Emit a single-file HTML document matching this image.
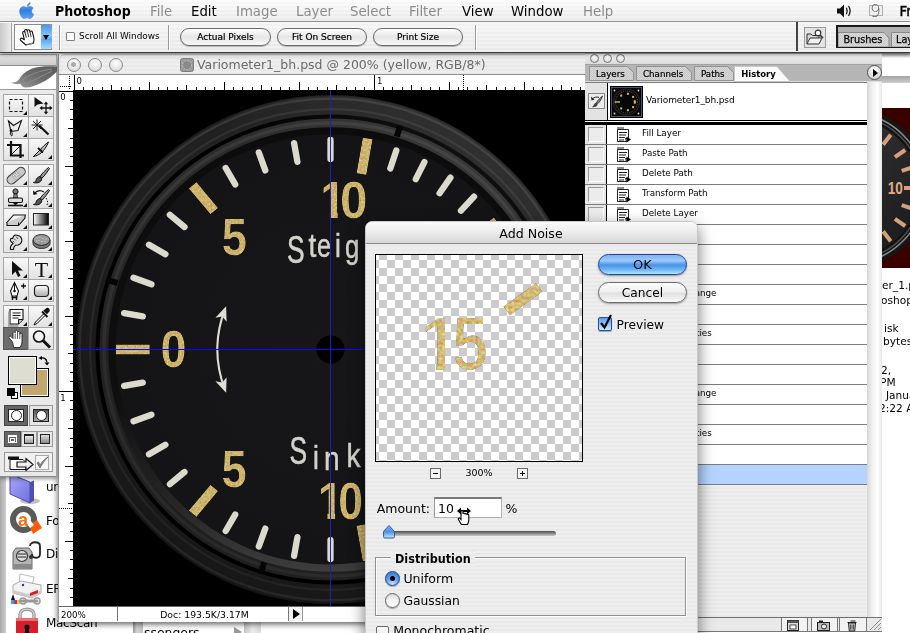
<!DOCTYPE html>
<html lang="en">
<head>
<meta charset="utf-8">
<title>Photoshop - Add Noise</title>
<style>
*{box-sizing:border-box;margin:0;padding:0}
html,body{width:910px;height:633px;overflow:hidden;background:#fff}
body{position:relative;font-family:"DejaVu Sans","Liberation Sans",sans-serif;font-size:9px;color:#000}
.abs{position:absolute}
body>div{will-change:transform}
.pin{background:repeating-linear-gradient(180deg,#eeeeee 0,#eeeeee 2px,#e9e9e9 2px,#e9e9e9 4px)}
#menubar.pin{background:linear-gradient(180deg,rgba(255,255,255,.75),rgba(255,255,255,0)),repeating-linear-gradient(180deg,#f1f1f1 0,#f1f1f1 2px,#e9e9e9 2px,#e9e9e9 4px)}
#optbar.pin{background:linear-gradient(180deg,rgba(255,255,255,.45),rgba(255,255,255,0)),repeating-linear-gradient(180deg,#f0f0f0 0,#f0f0f0 2px,#e9e9e9 2px,#e9e9e9 4px)}
/* ---------- menu bar ---------- */
#menubar{left:0;top:0;width:910px;height:22px;border-bottom:1px solid #8e8e8e;z-index:50}
#menubar span{position:absolute;top:2px;font-size:13.300px;line-height:19px;white-space:nowrap}
#menubar .dis{color:#8c8c8c}
/* ---------- options bar ---------- */
#optbar{left:0;top:22px;width:910px;height:31px;border-bottom:1px solid #3a3a3a;box-shadow:inset 0 1px 0 #fafafa,0 1px 4px rgba(0,0,0,.5);z-index:49}
.pill{position:absolute;top:6px;height:18px;border:1px solid #6a6a6a;border-radius:9px;background:linear-gradient(180deg,#fefefe 0,#e6e6e6 50%,#f8f8f8 100%);font-size:9px;line-height:16px;-webkit-text-stroke:.2px #000;text-align:center;box-shadow:0 1px 1px rgba(0,0,0,.25)}
.vsep{position:absolute;top:3px;width:2px;height:25px;border-left:1px solid #9a9a9a;border-right:1px solid #fff}
/* ---------- document window ---------- */
#doc{left:58px;top:54px;width:540px;height:568px;z-index:10;background:#fff;border-left:1px solid #9a9a9a;box-shadow:0 2px 6px rgba(0,0,0,.65)}
#doctitle{left:0;top:0;width:540px;height:21px;border-bottom:1px solid #8e8e8e;border-radius:6px 0 0 0;border-top:1px solid #c4c4c4}
#doctitle .t{position:absolute;left:138px;top:1px;font-size:12.5px;line-height:18px;color:#6b6b6b;white-space:nowrap}
.tl{position:absolute;top:3px;width:14px;height:14px;border-radius:50%;border:1px solid #8c8c8c;background:radial-gradient(circle at 50% 35%,#fff 0,#e4e4e4 60%,#cfcfcf 100%)}
#canvas{left:14px;top:36px;width:525px;height:516px;background:#000;overflow:hidden}
/* ---------- toolbox ---------- */
#toolbox{left:0;top:54px;width:57px;height:423px;z-index:20;background:#e9e9e9;border-right:1px solid #a4a4a4;border-bottom:1px solid #8a8a8a;box-shadow:0 2px 4px rgba(0,0,0,.4)}
.tc{position:absolute;width:25px;height:22px;border:1px solid #a6a6a6;background:linear-gradient(180deg,#f8f8f8,#e2e2e2)}
.tc.sel{background:#6d6d6d;border-color:#555}
.tc svg{position:absolute;left:0;top:0}
.tri{position:absolute;right:1px;bottom:1px;width:0;height:0;border-left:4px solid transparent;border-bottom:4px solid #111}
/* ---------- history palette ---------- */
#hist{left:585px;top:52px;width:298px;height:581px;z-index:30;background:#e4e4e4}
.hrow{position:absolute;left:0;width:283px;height:20px;background:#fff;border-bottom:1px solid #7c7c7c}
.hrow .lc{position:absolute;left:0;top:0;width:22px;height:19px;background:#e6e6e6;border-right:1px solid #000}
.hrow .lc i{position:absolute;left:3px;top:2px;width:16px;height:15px;border:1px solid #999;border-right-color:#fff;border-bottom-color:#fff;background:#ececec}
.hrow .tx{position:absolute;left:57px;top:2px;font-size:8.750px;line-height:12px;white-space:nowrap}
.hrow svg{position:absolute;left:31px;top:2px}
/* ---------- dialog ---------- */
#dlg{left:365px;top:222px;width:330px;height:420px;z-index:60;border:1px solid #c9c9c9;border-radius:7px 7px 0 0;box-shadow:0 6px 16px rgba(0,0,0,.55);overflow:hidden}
#dlg .lbl{position:absolute;font-size:12.5px;line-height:16px;white-space:nowrap}
.aqbtn{position:absolute;left:233px;width:88px;height:21px;border-radius:11px;font-size:13px;line-height:19px;text-align:center;border:1px solid #5a5a5a}
</style>
</head>
<body>
<!--BG--><div class="abs" style="left:0;top:53px;width:60px;height:580px;background:#fff"></div>
<div class="abs" style="left:0;top:470px;width:6px;height:163px;background:linear-gradient(90deg,#a9a9a9,#cfcfcf)"></div>
<svg class="abs" style="left:8px;top:474px" width="34" height="32" viewBox="0 0 34 32"><defs><linearGradient id="fo" x1="0" y1="0" x2="1" y2="1"><stop offset="0" stop-color="#a9a9f6"/><stop offset="1" stop-color="#6f6fe0"/></linearGradient></defs><ellipse cx="22" cy="27" rx="10" ry="3" fill="rgba(0,0,0,.25)"/><path d="M2 0v20l20 9V8z" fill="url(#fo)" stroke="#4c4ca8" stroke-width="1"/><path d="M22 8l4-1.500v20l-4 2.500z" fill="#4f4fb0"/></svg>
<svg class="abs" style="left:9px;top:505px" width="34" height="34" viewBox="0 0 34 34"><circle cx="14.500" cy="14.500" r="10.500" fill="#fff" stroke="#5a5a5a" stroke-width="6"/><path d="M20 20l8-5 5 8-9 6z" fill="#ff5a0a"/><path d="M18 19l4-3 3 4-4 3z" fill="#fff"/><text x="9" y="21" font-family="Liberation Sans, sans-serif" font-weight="bold" font-size="18" fill="#ff6a10">a</text></svg>
<svg class="abs" style="left:10px;top:540px" width="34" height="32" viewBox="0 0 34 32"><path d="M3 12l3-4h13l3 4v17H3z" fill="#b5b5b5" stroke="#666" stroke-width="1"/><rect x="3" y="24" width="19" height="5" fill="#8a8a8a"/><circle cx="12" cy="16" r="5.500" fill="#ddd" stroke="#333" stroke-width="1.200"/><path d="M8 14h8M8 17h8" stroke="#222" stroke-width="1.200"/><path d="M20 6c0-5 10-5 10 0v8c0 5-8 5-8 0" fill="none" stroke="#222" stroke-width="1.800"/><circle cx="21" cy="17" r="2" fill="#333"/></svg>
<svg class="abs" style="left:10px;top:573px" width="34" height="32" viewBox="0 0 34 32"><path d="M10 1l14 3-2 9-13-2z" fill="#fff" stroke="#bbb"/><path d="M3 12l8-4 20 4v8l-9 5-19-5z" fill="#f2f2f2" stroke="#aaa"/><path d="M3 17l19 5 9-5v3l-9 5-19-5z" fill="#ccc"/><path d="M20 20l8-3v3l-8 3z" fill="#d02020"/><circle cx="13" cy="12" r="1.200" fill="#2030c0"/><path d="M1 27l2-6 2 6z" fill="#111"/><rect x="1" y="27" width="3" height="4" fill="#20b0d0"/><rect x="4" y="27" width="3" height="4" fill="#d020a0"/><rect x="7" y="27" width="3" height="4" fill="#e0d020"/><path d="M11 28h16" stroke="#999" stroke-width="3" stroke-linecap="round"/><circle cx="13" cy="28" r="3" fill="none" stroke="#999" stroke-width="1.500"/><circle cx="27" cy="28" r="3" fill="none" stroke="#999" stroke-width="1.500"/></svg>
<svg class="abs" style="left:14px;top:606px" width="26" height="28" viewBox="0 0 26 28"><path d="M6 14V8.500c0-7 14-7 14 0V14" fill="none" stroke="#9a9a9a" stroke-width="3.500"/><path d="M6 14V8.500c0-7 14-7 14 0V14" fill="none" stroke="#d8d8d8" stroke-width="1.200"/><rect x="2" y="12" width="22" height="18" rx="2" fill="#d3202e"/><rect x="2" y="12" width="22" height="3" fill="#ef6a72"/><circle cx="13" cy="21" r="2.600" fill="#111"/><path d="M11.500 22h3l1 6h-5z" fill="#111"/></svg>
<div class="abs" style="left:45.500px;top:479.4px;font-size:12px;letter-spacing:-.3px;line-height:16px;white-space:nowrap">un</div>
<div class="abs" style="left:45.500px;top:512.8px;font-size:12px;letter-spacing:-.3px;line-height:16px;white-space:nowrap">Fo</div>
<div class="abs" style="left:45.500px;top:546.3px;font-size:12px;letter-spacing:-.3px;line-height:16px;white-space:nowrap">Di</div>
<div class="abs" style="left:45.500px;top:580.5px;font-size:12px;letter-spacing:-.3px;line-height:16px;white-space:nowrap">EP</div>
<div class="abs" style="left:45.500px;top:614.5px;font-size:12px;letter-spacing:-.3px;line-height:16px;white-space:nowrap">MacScan</div>
<div class="abs" style="left:133px;top:620px;width:10px;height:13px;background:linear-gradient(90deg,#9a9a9a,#d6d6d6 40%,#c2c2c2)"></div>
<div class="abs" style="left:144px;top:625px;font-size:12.400px;line-height:16px;white-space:nowrap">ssengers</div>
<div class="abs" style="left:234px;top:627px;width:0;height:0;border-top:5px solid transparent;border-bottom:5px solid transparent;border-left:8px solid #9a9a9a"></div>
<div class="abs" style="left:244px;top:620px;width:17px;height:13px;background:linear-gradient(90deg,#c4c4c4,#ededed 50%,#dcdcdc)"></div>
<div class="abs" style="left:880px;top:53px;width:30px;height:580px;background:#fff"></div>
<div class="abs" style="left:882px;top:53px;width:28px;height:5px;background:linear-gradient(180deg,#8e8e8e,#fff)"></div>
<div class="abs" style="left:882px;top:76px;width:28px;height:7px;background:linear-gradient(180deg,#a4a4a4,#cdcdcd)"></div>
<svg class="abs" style="left:882px;top:108px" width="28" height="160" viewBox="882 108 28 160"><defs><linearGradient id="rf" x1="0" y1="0" x2="1" y2="1"><stop offset="0" stop-color="#3a3a3e"/><stop offset="1" stop-color="#19191b"/></linearGradient></defs><rect x="882" y="108" width="28" height="160" fill="#3a0000"/><circle cx="850" cy="188" r="80" fill="#161616"/><circle cx="850" cy="188" r="75" fill="none" stroke="#8a8a8a" stroke-width="1.500"/><circle cx="850" cy="188" r="72" fill="none" stroke="#4c4c4c" stroke-width="1.500"/><circle cx="850" cy="188" r="69.500" fill="url(#rf)" stroke="#0c0c0c" stroke-width="1"/><path d="M883.1 144.7L890.7 134.8M894.9 157.1L905.2 150.0M901.7 170.9L913.6 167.0M904.0 188.0L917.0 188.0M901.7 205.1L913.6 209.0M894.9 218.9L905.2 226.0M883.1 231.3L890.7 241.2" stroke="#d6a07a" stroke-width="4" fill="none"/><text transform="translate(887.800,194.200) scale(.8,1)" font-family="Liberation Sans, sans-serif" font-weight="bold" font-size="17" fill="#e2ad86">10</text></svg>
<div class="abs" style="left:881.5px;top:278.3px;font-size:10.600px;line-height:14px;white-space:nowrap">er_1.p</div>
<div class="abs" style="left:881px;top:292.5px;font-size:10.600px;line-height:14px;white-space:nowrap">oshop</div>
<div class="abs" style="left:883.7px;top:321.0px;font-size:10.600px;line-height:14px;white-space:nowrap">isk</div>
<div class="abs" style="left:882.5px;top:334.0px;font-size:10.600px;line-height:14px;white-space:nowrap">bytes</div>
<div class="abs" style="left:881px;top:362.5px;font-size:10.600px;line-height:14px;white-space:nowrap">2,</div>
<div class="abs" style="left:880px;top:374.5px;font-size:10.600px;line-height:14px;white-space:nowrap">PM</div>
<div class="abs" style="left:885.6px;top:388.0px;font-size:10.600px;line-height:14px;white-space:nowrap">Janua</div>
<div class="abs" style="left:879px;top:401.0px;font-size:10.600px;line-height:14px;white-space:nowrap">2:22 A</div><!--BG_END-->
<!--DOC--><div id="doc" class="abs">
<div id="doctitle" class="abs pin"><div class="tl" style="left:8px"><b style="position:absolute;left:3px;top:3px;width:5px;height:5px;border-radius:50%;background:#a9a9a9"></b></div><div class="tl" style="left:29px"></div><div class="tl" style="left:50px"></div>
<svg class="abs" style="left:121px;top:3px" width="14" height="14" viewBox="0 0 14 14"><rect x=".5" y=".5" width="13" height="13" rx="2" fill="#9b9b9b" stroke="#7d7d7d"/><circle cx="7" cy="7" r="4.500" fill="#8a8a8a" stroke="#c9c9c9" stroke-width="1" stroke-dasharray="1.500 1.500"/></svg>
<div class="t">Variometer1_bh.psd @ 200% (yellow, RGB/8*)</div></div>
<svg class="abs" style="left:0;top:21px" width="540" height="15" viewBox="59 75 540 15">
<rect x="59" y="75" width="540" height="15" fill="#fff"/>
<path d="M60 86.500H72M69.500 76v13" stroke="#000" stroke-width="1" stroke-dasharray="1 1" fill="none"/>
<path d="M74.5 75V90M83.5 87V90M92.5 87V90M102.5 87V90M111.5 85V90M121.5 87V90M130.5 87V90M139.5 87V90M149.5 82V90M158.5 87V90M167.5 87V90M177.5 87V90M186.5 85V90M196.5 87V90M205.5 87V90M214.5 87V90M224.5 82V90M233.5 87V90M242.5 87V90M252.5 87V90M261.5 85V90M271.5 87V90M280.5 87V90M289.5 87V90M299.5 82V90M308.5 87V90M317.5 87V90M327.5 87V90M336.5 85V90M346.5 87V90M355.5 87V90M364.5 87V90M374.5 75V90M383.5 87V90M392.5 87V90M402.5 87V90M411.5 85V90M421.5 87V90M430.5 87V90M439.5 87V90M449.5 82V90M458.5 87V90M467.5 87V90M477.5 87V90M486.5 85V90M496.5 87V90M505.5 87V90M514.5 87V90M524.5 82V90M533.5 87V90M542.5 87V90M552.5 87V90M561.5 85V90M571.5 87V90M580.5 87V90M589.5 87V90M599.5 82V90" stroke="#000" stroke-width="1" fill="none"/><path d="M463.500 75V90" stroke="#000" stroke-width="1" stroke-dasharray="1 1"/>
<text x="76.500" y="84" font-size="8.500" font-family="DejaVu Sans, sans-serif">0</text><text x="377" y="84" font-size="8.500" font-family="DejaVu Sans, sans-serif">1</text>
</svg>
<svg class="abs" style="left:0;top:36px" width="14" height="516" viewBox="59 90 14 516">
<rect x="59" y="90" width="15" height="516" fill="#fff"/>
<path d="M58 91.5H73M70 100.5H73M70 109.5H73M70 119.5H73M68 128.5H73M70 138.5H73M70 147.5H73M70 156.5H73M65 166.5H73M70 175.5H73M70 184.5H73M70 194.5H73M68 203.5H73M70 213.5H73M70 222.5H73M70 231.5H73M65 241.5H73M70 250.5H73M70 259.5H73M70 269.5H73M68 278.5H73M70 288.5H73M70 297.5H73M70 306.5H73M65 316.5H73M70 325.5H73M70 334.5H73M70 344.5H73M68 353.5H73M70 363.5H73M70 372.5H73M70 381.5H73M58 391.5H73M70 400.5H73M70 409.5H73M70 419.5H73M68 428.5H73M70 438.5H73M70 447.5H73M70 456.5H73M65 466.5H73M70 475.5H73M70 484.5H73M70 494.5H73M68 503.5H73M70 513.5H73M70 522.5H73M70 531.5H73M65 541.5H73M70 550.5H73M70 559.5H73M70 569.5H73M68 578.5H73M70 588.5H73M70 597.5H73" stroke="#000" stroke-width="1" fill="none"/>
<text x="60.200" y="99.500" font-size="8.500" font-family="DejaVu Sans, sans-serif">0</text><text x="60.200" y="400.500" font-size="8.500" font-family="DejaVu Sans, sans-serif">1</text>
<path d="M59 508.500H72" stroke="#000" stroke-width="1" stroke-dasharray="1 1"/>
</svg>
<div id="canvas" class="abs"><svg class="abs" style="left:0;top:0" width="525" height="516" viewBox="73 90 525 516">
<defs><filter id="nz" x="0" y="0" width="100%" height="100%" color-interpolation-filters="sRGB"><feTurbulence type="fractalNoise" baseFrequency="0.55" numOctaves="1" seed="7" result="t"/><feColorMatrix in="t" type="matrix" values="1 0 0 0 0  0 1 0 0 0  0 0 1 0 0  0 0 0 0 1" result="n"/><feMorphology in="SourceGraphic" operator="erode" radius="0.350" result="e"/><feComposite in="e" in2="n" operator="arithmetic" k1="0" k2="1" k3="0.5" k4="-0.26" result="a"/><feComposite in="a" in2="e" operator="in"/></filter>
<linearGradient id="shade" gradientUnits="userSpaceOnUse" x1="450" y1="120" x2="150" y2="530"><stop offset="0" stop-color="#fff" stop-opacity=".07"/><stop offset=".28" stop-color="#fff" stop-opacity="0"/><stop offset=".3" stop-color="#000" stop-opacity="0"/><stop offset=".5" stop-color="#000" stop-opacity=".06"/><stop offset=".75" stop-color="#000" stop-opacity=".2"/><stop offset="1" stop-color="#000" stop-opacity=".3"/></linearGradient><linearGradient id="wall" gradientUnits="userSpaceOnUse" x1="330" y1="130" x2="330" y2="570"><stop offset="0" stop-color="#0c0c0c"/><stop offset=".6" stop-color="#0e0e0e"/><stop offset=".85" stop-color="#262626"/><stop offset="1" stop-color="#3c3c3c"/></linearGradient>
<radialGradient id="face" cx="50%" cy="50%" r="50%"><stop offset="0" stop-color="#17171a"/><stop offset="1" stop-color="#141417"/></radialGradient></defs>
<circle cx="330.5" cy="349.5" r="254.5" fill="#1a1a1a" />
<circle cx="330.5" cy="349.5" r="253.5" fill="#212121" />
<circle cx="330.5" cy="349.5" r="250.8" fill="none" stroke="#363636" stroke-width="2.4"/>
<circle cx="330.5" cy="349.5" r="240.3" fill="none" stroke="#313131" stroke-width="2.2"/>
<circle cx="330.5" cy="349.5" r="235" fill="#000" />
<circle cx="330.5" cy="349.5" r="231" fill="#2b2b2b" />
<circle cx="330.5" cy="349.5" r="226.5" fill="none" stroke="#393939" stroke-width="3.4"/>
<circle cx="330.5" cy="349.5" r="254.5" fill="url(#shade)" />
<circle cx="330.5" cy="349.5" r="222.2" fill="url(#wall)" />
<circle cx="330.5" cy="349.5" r="215" fill="url(#face)" />
<rect x="-3" y="-6" width="6" height="11" fill="#050505" transform="translate(112.8,281.7) rotate(-72.7)"/>
<rect x="-3" y="-6" width="6" height="11" fill="#050505" transform="translate(398.3,131.8) rotate(17.3)"/>
<rect x="-3" y="-6" width="6" height="11" fill="#050505" transform="translate(548.2,417.3) rotate(107.3)"/>
<rect x="-3" y="-6" width="6" height="11" fill="#050505" transform="translate(262.7,567.2) rotate(197.3)"/>
<path d="M142.8 316.4L124.1 313.1M142.8 382.6L124.1 385.9M151.4 284.3L133.5 277.8M151.4 414.7L133.5 421.2M165.4 254.2L149.0 244.7M165.4 444.8L149.0 454.3M184.5 227.0L169.9 214.8M184.5 472.0L169.9 484.2M235.2 184.4L225.7 168.0M235.2 514.6L225.7 531.0M265.3 170.4L258.8 152.5M265.3 528.6L258.8 546.5M297.4 161.8L294.1 143.1M297.4 537.2L294.1 555.9M330.5 158.9L330.5 139.9M330.5 540.1L330.5 559.1M390.3 168.5L396.3 150.5M390.3 530.5L396.3 548.5M415.8 179.1L424.4 162.1M415.8 519.9L424.4 536.9M439.6 193.2L450.4 177.6M439.6 505.8L450.4 521.4M461.0 210.6L474.0 196.7M461.0 488.4L474.0 502.3" stroke="#dcdacd" stroke-width="6.300" stroke-linecap="round" fill="none"/>
<g filter="url(#nz)">
<path d="M149.8 349.5L116.0 349.5M214.3 211.1L192.6 185.2M214.3 487.9L192.6 513.8M361.4 174.2L367.7 138.3M361.4 524.8L367.7 560.7M473.7 239.2L496.9 221.4M473.7 459.8L496.9 477.6" stroke="#cfb66e" stroke-width="10" fill="none"/>
<clipPath id="one"><path d="M10.500 -40H19.500V2H10.500ZM0 -40H11V-20H0Z"/></clipPath>
<text transform="translate(160.4,367.2) scale(0.92,1)" font-family="Liberation Sans, sans-serif" font-weight="bold" font-size="51" fill="#cfb66e">0</text>
<text transform="translate(221.7,255) scale(0.89,1)" font-family="Liberation Sans, sans-serif" font-weight="bold" font-size="51" fill="#cfb66e">5</text>
<text transform="translate(221.5,487.4) scale(0.89,1)" font-family="Liberation Sans, sans-serif" font-weight="bold" font-size="51" fill="#cfb66e">5</text>
<text transform="translate(320.3,218.1) scale(0.9,1)" clip-path="url(#one)" font-family="Liberation Sans, sans-serif" font-weight="bold" font-size="51" fill="#cfb66e">1</text>
<text transform="translate(340,218) scale(0.97,1)" font-family="Liberation Sans, sans-serif" font-weight="bold" font-size="51" fill="#cfb66e">0</text>
<text transform="translate(317.8,519.3) scale(0.9,1)" clip-path="url(#one)" font-family="Liberation Sans, sans-serif" font-weight="bold" font-size="51" fill="#cfb66e">1</text>
<text transform="translate(338.2,519.2) scale(0.875,1)" font-family="Liberation Sans, sans-serif" font-weight="bold" font-size="51" fill="#cfb66e">0</text>
</g>
<g opacity=".99" font-family="Liberation Sans, sans-serif" font-size="33" fill="#d6d6ce" stroke="#d6d6ce" stroke-width=".5" text-anchor="middle">
<text transform="translate(295.8,263) scale(0.8,1.19)">S</text>
<text transform="translate(312.5,257.2) scale(0.85,1)">t</text>
<text transform="translate(324,256.8) scale(0.76,1)">e</text>
<text transform="translate(337.9,256.6) scale(0.8,1)">i</text>
<text transform="translate(352.2,257.6) scale(0.78,1)">g</text>
<text transform="translate(373,258.5) scale(0.76,1)">e</text>
<text transform="translate(388,262) scale(0.8,1)">n</text>
<text transform="translate(298.3,464.1) scale(0.8,1.15)">S</text>
<text transform="translate(315.9,468.5) scale(0.8,1)">i</text>
<text transform="translate(331.9,470) scale(0.85,1)">n</text>
<text transform="translate(353.6,466.5) scale(0.85,1)">k</text>
<text transform="translate(373,465) scale(0.76,1)">e</text>
<text transform="translate(388,462) scale(0.8,1)">n</text>
</g>
<path d="M224.7 309.9A113 113 0 0 0 224.7 389.1" stroke="#deded6" stroke-width="2.100" fill="none"/>
<path d="M0 -4L6 10.500L0 7L-6 10.500Z" fill="#deded6" transform="translate(224.7,309.9) rotate(20.5)"/>
<path d="M0 -4L6 10.500L0 7L-6 10.500Z" fill="#deded6" transform="translate(224.7,389.1) rotate(159.5)"/>
<circle cx="330.5" cy="349.5" r="14" fill="#000" />
<path d="M330.500 90V606" stroke="#1a22b8" stroke-width="1"/><path d="M73 349.500H598" stroke="#0a0aff" stroke-width="1"/>
</svg></div>
<div class="abs" style="left:0;top:552px;width:540px;height:16px;background:#fff;border-top:1px solid #666"></div>
<div class="abs" style="left:0;top:553px;width:59px;height:14px;border-right:1px solid #777;font-size:8.700px;line-height:16px;padding-left:2px">200%</div>
<div class="abs" style="left:59px;top:553px;width:171px;height:14px;border-right:1px solid #777;font-size:9.300px;line-height:16px;text-align:center;padding-left:3px">Doc: 193.5K/3.17M</div>
<div class="abs" style="left:230px;top:553px;width:14px;height:14px;border-right:1px solid #999;background:#f4f4f4"><div class="abs" style="left:4px;top:2px;width:0;height:0;border-top:5px solid transparent;border-bottom:5px solid transparent;border-left:7px solid #000"></div></div>
</div><!--DOC_END-->
<!--TOOLBOX--><div id="toolbox" class="abs">
<div class="abs" style="left:0;top:0;width:56px;height:12px;background:linear-gradient(180deg,#e2e2e2,#cdcdcd);border-bottom:1px solid #8f8f8f;border-top:1px solid #9c9c9c"></div>
<div class="abs" style="left:0;top:12px;width:56px;height:24px;background:#fff;border-bottom:1px solid #9a9a9a"></div>
<svg class="abs" style="left:8px;top:11px" width="49" height="26" viewBox="0 0 49 26"><defs><linearGradient id="fg" x1="0" y1="1" x2="1" y2="0"><stop offset="0" stop-color="#a0a0a0"/><stop offset=".5" stop-color="#6e6e6e"/><stop offset="1" stop-color="#595959"/></linearGradient></defs><path d="M3 17.500c4 .5 6-1 8-3 2.500-5 8-9.500 15-11.500 6-1.600 12-2 23-1.500v5c-5 5-10 9-17 12-5 2.200-11 4.500-15 4-2.500-.3-3.500-1.800-4.500-3.800-3 .8-6.500.6-9.500-1.200z" fill="url(#fg)"/><path d="M14 15c7-5 16-9 30-11M17 19c8-3 17-8 27-13" stroke="#8d8d8d" stroke-width="1" fill="none"/></svg>
<div class="tc" style="left:3px;top:40px;width:26px;height:23px"><svg width="24" height="21" viewBox="0 0 24 21"><rect x="5.500" y="4.500" width="13" height="12" fill="none" stroke="#111" stroke-width="1.200" stroke-dasharray="3 2"/></svg><div class="tri"></div></div>
<div class="tc" style="left:28px;top:40px;width:26px;height:23px"><svg width="24" height="21" viewBox="0 0 24 21"><path d="M5.500 2v10l3-2.500 6-1z" fill="#111"/><path d="M17 8.500v9M12.500 13h9" stroke="#111" stroke-width="1.300" fill="none"/><path d="M17 6.500l-2.200 2.800h4.400zM17 19.500l-2.200-2.800h4.400zM10.500 13l2.800-2.200v4.400zM23.500 13l-2.800-2.200v4.400z" fill="#111"/></svg></div>
<div class="tc" style="left:3px;top:62px;width:26px;height:23px"><svg width="24" height="21" viewBox="0 0 24 21"><path d="M4.500 4l5 4.500 8-5-3.500 10-7 1z" fill="none" stroke="#111" stroke-width="1.100"/><path d="M7 14.500c-1.500 2-.5 4 .8 4.500M7 14.500c2 1.500 1 3.500.800 4.500" stroke="#111" stroke-width="1" fill="none"/><circle cx="7" cy="13.500" r="1.400" fill="#111"/></svg><div class="tri"></div></div>
<div class="tc" style="left:28px;top:62px;width:26px;height:23px"><svg width="24" height="21" viewBox="0 0 24 21"><path d="M10 8.500l9.500 9" stroke="#111" stroke-width="2.200"/><path d="M8 2.500v11M2.500 8h11M4 4l8 8M12 4l-8 8" stroke="#111" stroke-width=".9"/></svg></div>
<div class="tc" style="left:3px;top:84px;width:26px;height:23px"><svg width="24" height="21" viewBox="0 0 24 21"><path d="M7 2v14.500h13M3 6h13.500v13" fill="none" stroke="#111" stroke-width="2.200"/><path d="M6 17l11-11" stroke="#111" stroke-width="1"/></svg></div>
<div class="tc" style="left:28px;top:84px;width:26px;height:23px"><svg width="24" height="21" viewBox="0 0 24 21"><path d="M19.500 3c-3 2-6 5-8.500 8l-6.500 6.500c3-.5 5-1.500 7.500-3.500l2.500-2.500c2.500-3 4-6 5-8.500z" fill="#bbb" stroke="#111" stroke-width="1"/><path d="M9 9l5 4.500" stroke="#111" stroke-width="2"/></svg><div class="tri"></div></div>
<div class="tc" style="left:3px;top:110px;width:26px;height:23px"><svg width="24" height="21" viewBox="0 0 24 21"><g transform="rotate(-40 12 10.500)"><rect x="1.500" y="6.500" width="21" height="8.500" rx="4.200" fill="#c9c9c9" stroke="#444" stroke-width="1.100"/><rect x="8.500" y="7" width="7" height="7.500" fill="#aaa"/><path d="M10 9h.1M12 9h.1M14 9h.1M10 11h.1M12 11h.1M14 11h.1M10 13h.1M12 13h.1M14 13h.1" stroke="#fff" stroke-width="1.200" stroke-linecap="round"/></g></svg><div class="tri"></div></div>
<div class="tc" style="left:28px;top:110px;width:26px;height:23px"><svg width="24" height="21" viewBox="0 0 24 21"><path d="M19.500 2.500c-3 2.500-6 5.500-8.500 9l2 1.700c3-3 5.500-6.500 7.500-9.700z" fill="#999" stroke="#111" stroke-width="1"/><path d="M11 11.500c-2.500.5-3.500 2-4 4-.3 1.200-1.500 1.800-2.500 2 3 .8 6.500.5 8-2.500.5-1.200.2-2.300-1.500-3.500z" fill="#555" stroke="#111" stroke-width="1"/></svg><div class="tri"></div></div>
<div class="tc" style="left:3px;top:132px;width:26px;height:23px"><svg width="24" height="21" viewBox="0 0 24 21"><circle cx="11.500" cy="4.500" r="2.600" fill="#777" stroke="#111" stroke-width="1"/><path d="M10 7h3l.5 4h-4z" fill="#888" stroke="#111" stroke-width=".8"/><rect x="4.500" y="11" width="14" height="4.500" rx="1.500" fill="#ddd" stroke="#111" stroke-width="1.100"/><path d="M4 18.500h15" stroke="#111" stroke-width="1.600"/><path d="M9 16h5l-2.500 2.500z" fill="#111"/></svg><div class="tri"></div></div>
<div class="tc" style="left:28px;top:132px;width:26px;height:23px"><svg width="24" height="21" viewBox="0 0 24 21"><path d="M19.500 2.500c-3 2.500-6 5.500-8.500 9l2 1.700c3-3 5.500-6.500 7.500-9.700z" fill="#999" stroke="#111" stroke-width="1"/><path d="M11 11.500c-2.500.5-3.500 2-4 4-.3 1.200-1.500 1.800-2.500 2 3 .8 6.500.5 8-2.500.5-1.200.2-2.300-1.500-3.500z" fill="#555" stroke="#111" stroke-width="1"/><path d="M5 6.500c3-3 7-3.500 10-1.500" stroke="#111" stroke-width="1.100" fill="none"/><path d="M4 3.500l.5 4.500 4-1z" fill="#111"/><path d="M17 11c2 2.500 2 5.500.5 8" stroke="#111" stroke-width="1" stroke-dasharray="1.500 1.500" fill="none"/></svg><div class="tri"></div></div>
<div class="tc" style="left:3px;top:154px;width:26px;height:23px"><svg width="24" height="21" viewBox="0 0 24 21"><path d="M9.500 6h11.500l-6.500 7.500H3z" fill="#f4f4f4" stroke="#111" stroke-width="1.100"/><path d="M3 13.500v3h11.500l6.500-7.500V6" fill="#ccc" stroke="#111" stroke-width="1.100"/><path d="M14.500 13.500v3" stroke="#111" stroke-width="1"/></svg><div class="tri"></div></div>
<div class="tc" style="left:28px;top:154px;width:26px;height:23px"><svg width="24" height="21" viewBox="0 0 24 21"><defs><linearGradient id="gg"><stop offset="0" stop-color="#fff"/><stop offset="1" stop-color="#000"/></linearGradient></defs><rect x="4.500" y="4.500" width="15" height="11.500" fill="url(#gg)" stroke="#222" stroke-width="1"/></svg><div class="tri"></div></div>
<div class="tc" style="left:3px;top:176px;width:26px;height:23px"><svg width="24" height="21" viewBox="0 0 24 21"><path d="M6.500 18.500c-.5-2.500.5-4.500 2.500-6l-2-2c-1.500-1.500-.5-3.500 1.500-3l1-2c.8-1.500 2.800-2 4-1 2 .2 3.500 1.500 4 3 .8 2 .2 4-1.500 5.500-1.500 1.200-3 1.500-4.500 1.200-1.500 1-2 2.500-2 4.300z" fill="#ddd" stroke="#111" stroke-width="1.100"/><path d="M10 7.500l2 2M12 5.500l2 2.500M9 10l1.500 1.500" stroke="#555" stroke-width="1"/></svg><div class="tri"></div></div>
<div class="tc" style="left:28px;top:176px;width:26px;height:23px"><svg width="24" height="21" viewBox="0 0 24 21"><ellipse cx="12.500" cy="9" rx="8.500" ry="5.500" fill="#9a9a9a" stroke="#333" stroke-width="1"/><path d="M4 9.500v3.500c1 3 4.500 4.500 8.500 4.500s7.500-1.500 8.500-4.500V9.500c-1 3-4.500 5-8.500 5s-7.500-2-8.500-5z" fill="#777" stroke="#333" stroke-width="1"/><path d="M8 7h.1M11 6h.1M14 7.500h.1M17 8h.1M10 9.500h.1M13 10.500h.1M16 10.500h.1M7.500 10h.1" stroke="#ddd" stroke-width="1.200" stroke-linecap="round"/></svg><div class="tri"></div></div>
<div class="tc" style="left:3px;top:203px;width:26px;height:23px"><svg width="24" height="21" viewBox="0 0 24 21"><path d="M8 3v14l3.500-3.500 2.500 5.500 2.500-1.200-2.500-5.300h5z" fill="#111"/></svg><div class="tri"></div></div>
<div class="tc" style="left:28px;top:203px;width:26px;height:23px"><svg width="24" height="21" viewBox="0 0 24 21"><text x="12.500" y="18.500" text-anchor="middle" font-family="Liberation Serif,serif" font-size="22" fill="#111">T</text></svg><div class="tri"></div></div>
<div class="tc" style="left:3px;top:225px;width:26px;height:23px"><svg width="24" height="21" viewBox="0 0 24 21"><path d="M10.500 2.500l4 8.500-1.500 5h-5l-1.500-5z" fill="#fff" stroke="#111" stroke-width="1.100"/><path d="M10.500 3v7" stroke="#111" stroke-width="1"/><circle cx="10.500" cy="11" r="1.300" fill="#111"/><path d="M7.500 17.500h6M8.500 16v4M12.500 16v4" stroke="#111" stroke-width="1.400"/><path d="M17 6h5M19.500 3.500v5" stroke="#111" stroke-width="1.300"/></svg><div class="tri"></div></div>
<div class="tc" style="left:28px;top:225px;width:26px;height:23px"><svg width="24" height="21" viewBox="0 0 24 21"><defs><linearGradient id="sg" x1="0" y1="0" x2="0" y2="1"><stop offset="0" stop-color="#fff"/><stop offset="1" stop-color="#aaa"/></linearGradient></defs><rect x="5.500" y="5.500" width="14" height="11" rx="3.500" fill="url(#sg)" stroke="#222" stroke-width="1.200"/></svg><div class="tri"></div></div>
<div class="tc" style="left:3px;top:251px;width:26px;height:23px"><svg width="24" height="21" viewBox="0 0 24 21"><path d="M6 3.500h13v10l-4.500 4.500H6z" fill="#fff" stroke="#111" stroke-width="1.100"/><path d="M19 13.500h-4.500V18" fill="#bbb" stroke="#111" stroke-width="1"/><path d="M8.500 7h8M8.500 9.500h8M8.500 12h6" stroke="#111" stroke-width="1"/><path d="M7 4.500v14.500h9" stroke="#999" stroke-width="1.500" fill="none" transform="translate(-2,1)"/></svg><div class="tri"></div></div>
<div class="tc" style="left:28px;top:251px;width:26px;height:23px"><svg width="24" height="21" viewBox="0 0 24 21"><path d="M17.500 2c1.800-.8 4 1.500 3 3.300l-2.500 3-3.800-3.600z" fill="#111"/><path d="M13 5.500l5.500 5.500" stroke="#111" stroke-width="2"/><path d="M14.500 8l-8 8-1.500 3 3-1.500 8-8z" fill="#eee" stroke="#111" stroke-width="1"/></svg><div class="tri"></div></div>
<div class="tc sel" style="left:3px;top:273px;width:26px;height:23px"><svg width="24" height="21" viewBox="0 0 24 21"><path d="M8.500 14L5.200 10c-1-1.300.8-2.600 1.900-1.400L9 10.500V4.800c0-1.600 2.200-1.600 2.200 0V3.500c0-1.600 2.300-1.600 2.300 0v1.200c0-1.600 2.300-1.600 2.300 0v1.500c0-1.400 2.200-1.400 2.200 0V13c0 3-1.200 4.500-1.800 6.500h-6.500c-.4-2-.8-3.700-1.200-5.500z" fill="#fff" stroke="#222" stroke-width=".9"/><path d="M11.200 5.500V11M13.500 5V11M15.800 6V11" stroke="#333" stroke-width=".8"/></svg></div>
<div class="tc" style="left:28px;top:273px;width:26px;height:23px"><svg width="24" height="21" viewBox="0 0 24 21"><circle cx="10" cy="8.500" r="5.500" fill="#f2f2f2" stroke="#111" stroke-width="1.600"/><path d="M14 12.500l7 7" stroke="#111" stroke-width="3"/></svg></div>
<div class="abs" style="left:20px;top:314px;width:29px;height:29px;border:1px solid #000;background:#c1a76b;box-shadow:inset 0 0 0 1px #fff"></div>
<div class="abs" style="left:8px;top:302px;width:29px;height:29px;border:1px solid #000;background:#deddd2;box-shadow:inset 0 0 0 1px #fff"></div>
<svg class="abs" style="left:38px;top:301px" width="12" height="12" viewBox="0 0 12 12"><path d="M2.500 3.500c3-1.500 6 0 6.500 4" stroke="#000" stroke-width="1.300" fill="none"/><path d="M.5 3l3.500-2v4zM9 10.500l-2.500-3h5z" fill="#000"/></svg>
<div class="abs" style="left:11px;top:338px;width:7px;height:7px;border:1px solid #000;background:#fff"></div><div class="abs" style="left:7px;top:334px;width:8px;height:8px;background:#000"></div>
<div class="abs" style="left:4px;top:351px;width:24px;height:21px;background:#666;border:1px solid #444"><div class="abs" style="left:3px;top:3px;width:16px;height:13px;background:#fff;border:1px solid #222"></div><div class="abs" style="left:6px;top:4px;width:11px;height:11px;border-radius:50%;border:1px solid #222;background:#fff"></div></div>
<div class="abs" style="left:29px;top:351px;width:24px;height:21px;background:#e4e4e4;border:1px solid #999"><div class="abs" style="left:3px;top:3px;width:16px;height:13px;background:linear-gradient(180deg,#555,#aaa);border:1px solid #222"></div><div class="abs" style="left:6px;top:4px;width:11px;height:11px;border-radius:50%;border:1px solid #222;background:#fff"></div></div>
<div class="abs" style="left:4px;top:377px;width:17px;height:16px;background:#666;border:1px solid #444"><div class="abs" style="left:3px;top:3px;width:9px;height:8px;border:1px solid #fff;border-top:2px solid #fff"></div><div class="abs" style="left:5px;top:6px;width:5px;height:4px;border:1px solid #fff"></div></div>
<div class="abs" style="left:21px;top:377px;width:16px;height:16px;background:#e8e8e8;border:1px solid #999"><div class="abs" style="left:2px;top:2px;width:10px;height:10px;border:1px solid #222;border-top:2px solid #222;background:linear-gradient(180deg,#eee,#999)"></div></div>
<div class="abs" style="left:37px;top:377px;width:16px;height:16px;background:#e8e8e8;border:1px solid #999"><div class="abs" style="left:2px;top:2px;width:10px;height:10px;border:1px solid #222;background:linear-gradient(180deg,#ddd,#888)"></div></div>
<div class="abs" style="left:4px;top:398px;width:49px;height:20px;background:#f0f0f0;border:1px solid #9a9a9a"></div>
<svg class="abs" style="left:6px;top:400px" width="45" height="17" viewBox="0 0 45 17"><rect x="2" y="2.500" width="11" height="3" fill="#111"/><path d="M4 5.500h13l3 3v7H4z" fill="#fff" stroke="#111" stroke-width="1"/><path d="M11 8h9V4.500l7 6-7 6V13h-9z" fill="#eee" stroke="#111" stroke-width="1.200"/><rect x="29.500" y="1.500" width="13" height="14" fill="#f6f6f6" stroke="#aaa"/><path d="M31 9l3 5c2-4 5-8 8-11-3 1.500-6 5-8 8l-1.500-3z" fill="#888" stroke="#666" stroke-width=".8"/></svg>
</div><!--TOOLBOX_END-->
<!--HIST--><div id="hist" class="abs" style="left:585px;top:53px;width:297px;height:579px;box-shadow:inset -1px 0 0 #b4b4b4">
<div class="abs" style="left:0;top:0;width:297px;height:11px;background:linear-gradient(180deg,#f0f0f0,#dcdcdc);border-top:1px solid #aaa"></div>
<div class="abs" style="left:5px;top:1px;width:9px;height:9px;border-radius:50%;border:1px solid #777;background:radial-gradient(circle at 50% 30%,#fff,#cfcfcf)"></div>
<div class="abs" style="left:18px;top:1px;width:9px;height:9px;border-radius:50%;border:1px solid #777;background:radial-gradient(circle at 50% 30%,#fff,#cfcfcf)"></div>
<div class="abs" style="left:31px;top:1px;width:9px;height:9px;border-radius:50%;border:1px solid #777;background:radial-gradient(circle at 50% 30%,#fff,#cfcfcf)"></div>
<div class="abs" style="left:0;top:11px;width:297px;height:19px;background:#b5b5b5;border-top:1px solid #a2a2a2;border-bottom:1px solid #7c7c7c"></div>
<div class="abs" style="left:0;top:28px;width:297px;height:1px;background:#dedede"></div>
<svg class="abs" style="left:0;top:11px" width="297" height="18" viewBox="585 64 297 18" font-family="DejaVu Sans, sans-serif" font-size="8.700">
<defs><pattern id="dots" width="2" height="2" patternUnits="userSpaceOnUse"><rect width="2" height="2" fill="#d8d8d8"/><rect width="1" height="1" fill="#c6c6c6"/><rect x="1" y="1" width="1" height="1" fill="#c6c6c6"/></pattern></defs>
<path d="M589.5 80.500V66.500H627.5L633.5 72.500V80.500z" fill="url(#dots)" stroke="#929292" stroke-width="1"/>
<text x="596" y="77" fill="#000" stroke="#000" stroke-width=".2">Layers</text>
<path d="M636.5 80.500V66.500H685.5L691.5 72.500V80.500z" fill="url(#dots)" stroke="#929292" stroke-width="1"/>
<text x="643" y="77" fill="#000" stroke="#000" stroke-width=".2">Channels</text>
<path d="M694.5 80.500V66.500H727.5L733.5 72.500V80.500z" fill="url(#dots)" stroke="#929292" stroke-width="1"/>
<text x="701" y="77" fill="#000" stroke="#000" stroke-width=".2">Paths</text>
<path d="M734.5 81.500V66.500H777L790 81.500z" fill="#fafafa" stroke="#c9c9c9" stroke-width="1"/>
<text x="741.300" y="77" font-weight="bold" font-family="DejaVu Sans Condensed, DejaVu Sans, sans-serif" font-size="9.400" fill="#000">History</text>
</svg>
<div class="abs" style="left:282px;top:12px;width:15px;height:15px;border-radius:50%;border:1px solid #555;background:radial-gradient(circle at 50% 30%,#fff,#c8c8c8)"><div class="abs" style="left:5px;top:2.500px;width:0;height:0;border-top:4px solid transparent;border-bottom:4px solid transparent;border-left:5px solid #000"></div></div>
<div class="abs" style="left:0;top:30px;width:282px;height:37px;background:#fff"></div>
<div class="abs" style="left:0;top:30px;width:23px;height:37px;background:#e3e3e3;border-right:1px solid #000"></div>
<div class="abs" style="left:3px;top:40px;width:17px;height:16px;border:1px solid #888;background:#ececec"></div>
<svg class="abs" style="left:5px;top:42px" width="14" height="13" viewBox="0 0 14 13"><path d="M12.500 1c-2.500 2-4.500 4-6 6.500l1.500 1c2-2 3.500-4.500 4.500-7.500z" fill="#888" stroke="#222" stroke-width=".8"/><path d="M6.500 7.500c-2 .5-2.500 1.500-3 3-.3.800-1 1.200-2 1.500 2.500.5 5 0 6-2 .3-1 0-1.700-1-2.500z" fill="#444"/><path d="M2 4.500c2-2.500 5-3 7-2" stroke="#222" stroke-width="1" fill="none"/><path d="M1 1.500l.5 4 3-1z" fill="#222"/></svg>
<svg class="abs" style="left:25px;top:33px" width="33" height="32" viewBox="0 0 33 32"><rect x=".5" y=".5" width="32" height="31" fill="#050505" stroke="#000"/><rect x="1.500" y="1.500" width="30" height="29" fill="none" stroke="#4e5676" stroke-width="1"/><rect x="2.500" y="2.500" width="28" height="27" rx="4" fill="#0a0a0a"/><circle cx="16.500" cy="16" r="13" fill="#070707" stroke="#262626" stroke-width="1.200"/><circle cx="16.500" cy="16" r="11" fill="none" stroke="#8f7a3e" stroke-width="1" stroke-dasharray=".7 1.300"/><rect x="10.2" y="8.6" width="2" height="2" fill="#d9b860"/><rect x="16.9" y="6.8" width="2" height="2" fill="#d9b860"/><rect x="22.1" y="9.9" width="2" height="2" fill="#d9b860"/><rect x="10.2" y="21.4" width="2" height="2" fill="#d9b860"/><rect x="16.9" y="23.2" width="2" height="2" fill="#d9b860"/><rect x="22.1" y="20.1" width="2" height="2" fill="#d9b860"/><rect x="23.8" y="15.7" width="2" height="2" fill="#d9b860"/><rect x="23.8" y="14.3" width="2" height="2" fill="#d9b860"/><path d="M4.500 16h5.500" stroke="#e2c46c" stroke-width="1.300"/><circle cx="4.500" cy="4.500" r=".9" fill="#ddd"/><circle cx="28.500" cy="4.500" r=".9" fill="#ddd"/><circle cx="4.500" cy="27.500" r=".9" fill="#ddd"/><circle cx="28.500" cy="27.500" r=".9" fill="#ddd"/></svg>
<div class="abs" style="left:61px;top:41px;font-size:9px;line-height:12px;white-space:nowrap;letter-spacing:-.1px">Variometer1_bh.psd</div>
<div class="abs" style="left:0;top:67px;width:282px;height:1px;background:#000"></div>
<div class="abs" style="left:0;top:68px;width:282px;height:1px;background:#fff"></div>
<div class="abs" style="left:0;top:69px;width:282px;height:3px;background:#000"></div>
<div class="hrow" style="top:72px;height:20px;background:#fff;width:282px"><div class="lc"><i></i></div><svg width="16" height="16" viewBox="0 0 16 16"><rect x="1" y="0" width="7" height="3" fill="#8c8c8c"/><path d="M1.500 2.500h11v9h-3l1 3h-9z" fill="#fff" stroke="#222" stroke-width="1"/><path d="M3 5.500h8M3 8h7M3 10.500h6M3 13h5" stroke="#222" stroke-width="1"/><path d="M10.500 9.500v6l4.500-3z" fill="#000"/></svg><div class="tx">Fill Layer</div></div>
<div class="hrow" style="top:92px;height:20px;background:#fff;width:282px"><div class="lc"><i></i></div><svg width="16" height="16" viewBox="0 0 16 16"><rect x="1" y="0" width="7" height="3" fill="#8c8c8c"/><path d="M1.500 2.500h11v9h-3l1 3h-9z" fill="#fff" stroke="#222" stroke-width="1"/><path d="M3 5.500h8M3 8h7M3 10.500h6M3 13h5" stroke="#222" stroke-width="1"/><path d="M10.500 9.500v6l4.500-3z" fill="#000"/></svg><div class="tx">Paste Path</div></div>
<div class="hrow" style="top:112px;height:20px;background:#fff;width:282px"><div class="lc"><i></i></div><svg width="16" height="16" viewBox="0 0 16 16"><rect x="1" y="0" width="7" height="3" fill="#8c8c8c"/><path d="M1.500 2.500h11v9h-3l1 3h-9z" fill="#fff" stroke="#222" stroke-width="1"/><path d="M3 5.500h8M3 8h7M3 10.500h6M3 13h5" stroke="#222" stroke-width="1"/><path d="M10.500 9.500v6l4.500-3z" fill="#000"/></svg><div class="tx">Delete Path</div></div>
<div class="hrow" style="top:132px;height:20px;background:#fff;width:282px"><div class="lc"><i></i></div><svg width="16" height="16" viewBox="0 0 16 16"><rect x="1" y="0" width="7" height="3" fill="#8c8c8c"/><path d="M1.500 2.500h11v9h-3l1 3h-9z" fill="#fff" stroke="#222" stroke-width="1"/><path d="M3 5.500h8M3 8h7M3 10.500h6M3 13h5" stroke="#222" stroke-width="1"/><path d="M10.500 9.500v6l4.500-3z" fill="#000"/></svg><div class="tx">Transform Path</div></div>
<div class="hrow" style="top:152px;height:20px;background:#fff;width:282px"><div class="lc"><i></i></div><svg width="16" height="16" viewBox="0 0 16 16"><rect x="1" y="0" width="7" height="3" fill="#8c8c8c"/><path d="M1.500 2.500h11v9h-3l1 3h-9z" fill="#fff" stroke="#222" stroke-width="1"/><path d="M3 5.500h8M3 8h7M3 10.500h6M3 13h5" stroke="#222" stroke-width="1"/><path d="M10.500 9.500v6l4.500-3z" fill="#000"/></svg><div class="tx">Delete Layer</div></div>
<div class="hrow" style="top:172px;height:20px;background:#fff;width:282px"><div class="lc"><i></i></div><svg width="16" height="16" viewBox="0 0 16 16"><rect x="1" y="0" width="7" height="3" fill="#8c8c8c"/><path d="M1.500 2.500h11v9h-3l1 3h-9z" fill="#fff" stroke="#222" stroke-width="1"/><path d="M3 5.500h8M3 8h7M3 10.500h6M3 13h5" stroke="#222" stroke-width="1"/><path d="M10.500 9.500v6l4.500-3z" fill="#000"/></svg><div class="tx">Fill Layer</div></div>
<div class="hrow" style="top:192px;height:20px;background:#fff;width:282px"><div class="lc"><i></i></div><svg width="16" height="16" viewBox="0 0 16 16"><rect x="1" y="0" width="7" height="3" fill="#8c8c8c"/><path d="M1.500 2.500h11v9h-3l1 3h-9z" fill="#fff" stroke="#222" stroke-width="1"/><path d="M3 5.500h8M3 8h7M3 10.500h6M3 13h5" stroke="#222" stroke-width="1"/><path d="M10.500 9.500v6l4.500-3z" fill="#000"/></svg><div class="tx">Paste Path</div></div>
<div class="hrow" style="top:212px;height:20px;background:#fff;width:282px"><div class="lc"><i></i></div><svg width="16" height="16" viewBox="0 0 16 16"><rect x="1" y="0" width="7" height="3" fill="#8c8c8c"/><path d="M1.500 2.500h11v9h-3l1 3h-9z" fill="#fff" stroke="#222" stroke-width="1"/><path d="M3 5.500h8M3 8h7M3 10.500h6M3 13h5" stroke="#222" stroke-width="1"/><path d="M10.500 9.500v6l4.500-3z" fill="#000"/></svg><div class="tx">Delete Path</div></div>
<div class="hrow" style="top:232px;height:20px;background:#fff;width:282px"><div class="lc"><i></i></div><svg width="16" height="16" viewBox="0 0 16 16"><rect x="1" y="0" width="7" height="3" fill="#8c8c8c"/><path d="M1.500 2.500h11v9h-3l1 3h-9z" fill="#fff" stroke="#222" stroke-width="1"/><path d="M3 5.500h8M3 8h7M3 10.500h6M3 13h5" stroke="#222" stroke-width="1"/><path d="M10.500 9.500v6l4.500-3z" fill="#000"/></svg><div class="tx" style="left:auto;right:150.5px">Blending Change</div></div>
<div class="hrow" style="top:252px;height:20px;background:#fff;width:282px"><div class="lc"><i></i></div><svg width="16" height="16" viewBox="0 0 16 16"><rect x="1" y="0" width="7" height="3" fill="#8c8c8c"/><path d="M1.500 2.500h11v9h-3l1 3h-9z" fill="#fff" stroke="#222" stroke-width="1"/><path d="M3 5.500h8M3 8h7M3 10.500h6M3 13h5" stroke="#222" stroke-width="1"/><path d="M10.500 9.500v6l4.500-3z" fill="#000"/></svg><div class="tx">Delete Path</div></div>
<div class="hrow" style="top:272px;height:20px;background:#fff;width:282px"><div class="lc"><i></i></div><svg width="16" height="16" viewBox="0 0 16 16"><rect x="1" y="0" width="7" height="3" fill="#8c8c8c"/><path d="M1.500 2.500h11v9h-3l1 3h-9z" fill="#fff" stroke="#222" stroke-width="1"/><path d="M3 5.500h8M3 8h7M3 10.500h6M3 13h5" stroke="#222" stroke-width="1"/><path d="M10.500 9.500v6l4.500-3z" fill="#000"/></svg><div class="tx" style="left:auto;right:155.2px">Layer Properties</div></div>
<div class="hrow" style="top:292px;height:20px;background:#fff;width:282px"><div class="lc"><i></i></div><svg width="16" height="16" viewBox="0 0 16 16"><rect x="1" y="0" width="7" height="3" fill="#8c8c8c"/><path d="M1.500 2.500h11v9h-3l1 3h-9z" fill="#fff" stroke="#222" stroke-width="1"/><path d="M3 5.500h8M3 8h7M3 10.500h6M3 13h5" stroke="#222" stroke-width="1"/><path d="M10.500 9.500v6l4.500-3z" fill="#000"/></svg><div class="tx">Fill Layer</div></div>
<div class="hrow" style="top:312px;height:20px;background:#fff;width:282px"><div class="lc"><i></i></div><svg width="16" height="16" viewBox="0 0 16 16"><rect x="1" y="0" width="7" height="3" fill="#8c8c8c"/><path d="M1.500 2.500h11v9h-3l1 3h-9z" fill="#fff" stroke="#222" stroke-width="1"/><path d="M3 5.500h8M3 8h7M3 10.500h6M3 13h5" stroke="#222" stroke-width="1"/><path d="M10.500 9.500v6l4.500-3z" fill="#000"/></svg><div class="tx">Paste Path</div></div>
<div class="hrow" style="top:332px;height:20px;background:#fff;width:282px"><div class="lc"><i></i></div><svg width="16" height="16" viewBox="0 0 16 16"><rect x="1" y="0" width="7" height="3" fill="#8c8c8c"/><path d="M1.500 2.500h11v9h-3l1 3h-9z" fill="#fff" stroke="#222" stroke-width="1"/><path d="M3 5.500h8M3 8h7M3 10.500h6M3 13h5" stroke="#222" stroke-width="1"/><path d="M10.500 9.500v6l4.500-3z" fill="#000"/></svg><div class="tx" style="left:auto;right:150.5px">Blending Change</div></div>
<div class="hrow" style="top:352px;height:20px;background:#fff;width:282px"><div class="lc"><i></i></div><svg width="16" height="16" viewBox="0 0 16 16"><rect x="1" y="0" width="7" height="3" fill="#8c8c8c"/><path d="M1.500 2.500h11v9h-3l1 3h-9z" fill="#fff" stroke="#222" stroke-width="1"/><path d="M3 5.500h8M3 8h7M3 10.500h6M3 13h5" stroke="#222" stroke-width="1"/><path d="M10.500 9.500v6l4.500-3z" fill="#000"/></svg><div class="tx">Delete Path</div></div>
<div class="hrow" style="top:372px;height:20px;background:#fff;width:282px"><div class="lc"><i></i></div><svg width="16" height="16" viewBox="0 0 16 16"><rect x="1" y="0" width="7" height="3" fill="#8c8c8c"/><path d="M1.500 2.500h11v9h-3l1 3h-9z" fill="#fff" stroke="#222" stroke-width="1"/><path d="M3 5.500h8M3 8h7M3 10.500h6M3 13h5" stroke="#222" stroke-width="1"/><path d="M10.500 9.500v6l4.500-3z" fill="#000"/></svg><div class="tx" style="left:auto;right:155.2px">Layer Properties</div></div>
<div class="hrow" style="top:392px;height:20px;background:#fff;width:282px"><div class="lc"><i></i></div><svg width="16" height="16" viewBox="0 0 16 16"><rect x="1" y="0" width="7" height="3" fill="#8c8c8c"/><path d="M1.500 2.500h11v9h-3l1 3h-9z" fill="#fff" stroke="#222" stroke-width="1"/><path d="M3 5.500h8M3 8h7M3 10.500h6M3 13h5" stroke="#222" stroke-width="1"/><path d="M10.500 9.500v6l4.500-3z" fill="#000"/></svg><div class="tx">Fill Layer</div></div>
<div class="hrow" style="top:412px;height:20px;background:#b4d4ff;width:282px"><div class="lc"><i></i></div><svg width="16" height="16" viewBox="0 0 16 16"><rect x="1" y="0" width="7" height="3" fill="#8c8c8c"/><path d="M1.500 2.500h11v9h-3l1 3h-9z" fill="#fff" stroke="#222" stroke-width="1"/><path d="M3 5.500h8M3 8h7M3 10.500h6M3 13h5" stroke="#222" stroke-width="1"/><path d="M10.500 9.500v6l4.500-3z" fill="#000"/></svg><div class="tx">Add Noise</div></div>
<div class="abs" style="left:0;top:432px;width:282px;height:132px;background:repeating-linear-gradient(180deg,#eeeeee 0,#eeeeee 2px,#e8e8e8 2px,#e8e8e8 4px)"></div>
<div class="abs" style="left:282px;top:29px;width:15px;height:535px;background:linear-gradient(90deg,#d6d6d6 0,#eeeeee 30%,#ffffff 70%,#e6e6e6 100%)"></div>
<div class="abs" style="left:0;top:564px;width:297px;height:15px;background:#e9e9e9;border-top:1px solid #6e6e6e;border-bottom:1px solid #777"></div>
<div class="abs" style="left:196px;top:565px;width:27px;height:13px;background:#f2f2f2;border-left:1px solid #777;border-right:1px solid #777"></div>
<div class="abs" style="left:226px;top:565px;width:27px;height:13px;background:#f2f2f2;border-left:1px solid #777;border-right:1px solid #777"></div>
<div class="abs" style="left:254px;top:565px;width:28px;height:13px;background:#f2f2f2;border-left:1px solid #777;border-right:1px solid #777"></div>
<svg class="abs" style="left:201px;top:565.5px" width="90" height="13" viewBox="0 0 90 13"><rect x="1.500" y="1.500" width="11" height="10" fill="#ddd" stroke="#222"/><rect x="1.500" y="1.500" width="11" height="2.500" fill="#555"/><rect x="4" y="6" width="6" height="4" fill="#fff" stroke="#222" stroke-width=".8"/><rect x="31.500" y="3.500" width="12" height="8" fill="#bbb" stroke="#222"/><rect x="33" y="1.500" width="4" height="2" fill="#222"/><circle cx="38" cy="7.500" r="2.500" fill="#eee" stroke="#222"/><path d="M62.500 4h7l-.8 8h-5.400z" fill="#ccc" stroke="#222"/><path d="M61.500 3.500h9M64.500 2h5" stroke="#222" stroke-width="1.200"/><path d="M64.500 5.500v5M66 5.500v5M67.500 5.500v5" stroke="#222" stroke-width=".7"/></svg>
<svg class="abs" style="left:283px;top:564px" width="14" height="14" viewBox="0 0 14 14"><path d="M2 13L13 2M6 13l7-7M10 13l3-3" stroke="#8a8a8a" stroke-width="1"/></svg>
</div><!--HIST_END-->
<div id="menubar" class="abs pin">
<svg class="abs" style="left:17px;top:1px" width="20" height="20" viewBox="0 0 20 20"><defs><linearGradient id="apg" x1="0" y1="0" x2="0" y2="1"><stop offset="0" stop-color="#6db6f5"/><stop offset=".5" stop-color="#2f7fe0"/><stop offset="1" stop-color="#5aa6f0"/></linearGradient></defs><path d="M10.2 5.2c.2-1.700 1.400-3.100 3.000-3.600.2 1.800-1.200 3.500-3.000 3.600zM6.300 5.600c1.300-.1 2.400.8 3.200.8.800 0 2.200-1.000 3.700-.8 1.300.1 2.300.7 3.000 1.700-2.500 1.500-2.000 5.000.5 6.000-.6 1.700-2.000 4.200-3.700 4.200-1.100 0-1.600-.7-3.000-.7s-1.900.7-3.000.7c-1.800 0-4.400-3.900-4.400-7.200 0-2.800 1.800-4.600 3.700-4.700z" fill="url(#apg)" stroke="#2a6fc8" stroke-width=".5"/></svg>
<span style="left:55px;font-family:'DejaVu Sans Condensed','DejaVu Sans',sans-serif;font-weight:bold;font-size:14px">Photoshop</span>
<span class="dis" style="left:150px">File</span>
<span style="left:191px">Edit</span>
<span class="dis" style="left:236px">Image</span>
<span class="dis" style="left:296px">Layer</span>
<span class="dis" style="left:350px">Select</span>
<span class="dis" style="left:409px">Filter</span>
<span style="left:462px">View</span>
<span style="left:511px">Window</span>
<span class="dis" style="left:583px">Help</span>
<svg class="abs" style="left:836px;top:3px" width="18" height="16" viewBox="0 0 18 16"><path d="M1 5.500h3l4-4v13l-4-4H1z" fill="#111"/><path d="M10.500 5.200q1.500 2.800 0 5.600M12.800 3.500q2.600 4.500 0 9" fill="none" stroke="#111" stroke-width="1.300" stroke-linecap="round"/></svg>
<div class="abs" style="left:869px;top:5px;width:14px;height:11px;border:1px solid #b0b0b0;background:#efefef"></div>
<span style="left:870px;top:1.500px;color:#5e5e5e;font-size:17px;font-family:'DejaVu Sans Light','DejaVu Sans',sans-serif;font-weight:200">9</span>
<span style="left:899.500px;-webkit-text-stroke:.45px #000">Fr</span>
</div>
<div id="optbar" class="abs pin">
<div class="abs" style="left:0;top:1px;width:12px;height:29px;background:linear-gradient(90deg,#c9c9c9,#ececec);border-right:1px solid #a4a4a4"></div>
<div class="abs" style="left:14px;top:2px;width:38px;height:26px;border:1px solid #8c8c8c;background:#fff"></div>
<div class="abs" style="left:41px;top:3px;width:11px;height:24px;border-radius:0 3px 3px 0;background:linear-gradient(180deg,#4b93ea 0,#8cc4fb 45%,#5aa7f3 60%,#a6dcff 100%)"></div>
<div class="abs" style="left:43px;top:13px;width:0;height:0;border-left:3.500px solid transparent;border-right:3.500px solid transparent;border-top:5px solid #000"></div>
<svg class="abs" style="left:17px;top:5px" width="21" height="20" viewBox="0 0 21 20"><g transform="rotate(-14 10 10)"><path d="M7 17.500L3.300 12.200C2 10.400 3.800 9 5.200 10.300L6.800 12V5.200C6.800 3.400 9.200 3.400 9.200 5.200V3.800C9.200 2 11.700 2 11.700 3.800V4.600C11.700 2.900 14.100 2.900 14.100 4.600V6.300C14.100 4.800 16.400 4.800 16.400 6.300V12.500C16.400 15 15.300 16 14.800 17.500Z" fill="#fff" stroke="#111" stroke-width="1.100" stroke-linejoin="round"/><path d="M9.200 5.500V10.500M11.700 4.800V10.500M14.100 6.500V10.800" stroke="#111" stroke-width=".8"/><path d="M8 17c2 .6 4.500 .6 6.500 0" stroke="#999" stroke-width="1" fill="none"/></g></svg>
<div class="vsep" style="left:59px"></div>
<div class="abs" style="left:66px;top:10px;width:9px;height:9px;border:1px solid #7d7d7d;background:#fff;border-radius:1px"></div>
<div class="abs" style="left:79px;top:7px;font-size:8.900px;line-height:14px;white-space:nowrap">Scroll All Windows</div>
<div class="vsep" style="left:168px"></div>
<div class="pill" style="left:180px;width:91px">Actual Pixels</div>
<div class="pill" style="left:277px;width:90px">Fit On Screen</div>
<div class="pill" style="left:373px;width:90px">Print Size</div>
<div class="vsep" style="left:475px"></div>
<div class="abs" style="left:796px;top:0;width:2px;height:29px;background:#444"></div>
<div class="abs" style="left:804px;top:5px;width:22px;height:21px;border:1px solid #9a9a9a;background:#e4e4e4"></div>
<svg class="abs" style="left:806px;top:7px" width="19" height="17" viewBox="0 0 19 17"><path d="M1 15V5h4l1.500 1.500H13V9" fill="#d8d8d8" stroke="#333" stroke-width="1"/><path d="M1 15l3-6h12l-3 6z" fill="#f2f2f2" stroke="#333" stroke-width="1"/><circle cx="12" cy="4" r="2.800" fill="#fff" stroke="#333" stroke-width="1.200"/><path d="M14 6l3 3" stroke="#333" stroke-width="1.600"/></svg>
<div class="abs" style="left:836px;top:3px;width:80px;height:23px;border:2px solid #1a1a1a;border-bottom-width:1px;background:#b2b2b2"></div>
<svg class="abs" style="left:838px;top:10px" width="72" height="15" viewBox="838 32 72 15"><defs><pattern id="dots2" width="2" height="2" patternUnits="userSpaceOnUse"><rect width="2" height="2" fill="#dadada"/><rect width="1" height="1" fill="#cacaca"/><rect x="1" y="1" width="1" height="1" fill="#cacaca"/></pattern></defs><path d="M838 47V32.500h46l5 5.500v9z" fill="url(#dots2)" stroke="#8a8a8a" stroke-width="1"/><path d="M891.500 47V32.500h20V47z" fill="url(#dots2)" stroke="#8a8a8a" stroke-width="1"/><text x="843.400" y="42.500" font-family="DejaVu Sans, sans-serif" font-size="9.700" fill="#000" stroke="#000" stroke-width=".25">Brushes</text><text x="896" y="42.500" font-family="DejaVu Sans, sans-serif" font-size="9.700" fill="#000" stroke="#000" stroke-width=".25">Lay</text></svg>
</div>
<!--BARS_END-->
<!--DLG--><div id="dlg" class="abs pin" style="left:365px;top:221px;width:333px;height:421px;background-position:0 1px">
<div class="abs" style="left:0;top:0;width:331px;height:22px;background:linear-gradient(180deg,#fbfbfb 0,#eaeaea 55%,#d6d6d6 100%);border-bottom:1px solid #8b8b8b"></div>
<div class="lbl" style="left:0;width:330px;top:4px;text-align:center;font-size:12.600px">Add Noise</div>
<div class="abs" style="left:9px;top:32px;width:208px;height:208px;border:1px solid #000;background-color:#fff;background-image:conic-gradient(#ccc 25%,#fff 0 50%,#ccc 0 75%,#fff 0);background-size:16px 16px;background-position:-5px -3px"></div>
<svg class="abs" style="left:10px;top:33px" width="206" height="206" viewBox="376 255 206 206"><g filter="url(#nz2)" font-family="Liberation Sans, sans-serif" font-weight="bold" font-size="78" fill="#d2b872"><clipPath id="one2"><path d="M17 -60H29V3H17ZM0 -60H18V-30H0Z"/></clipPath><text transform="translate(420,370.600) scale(.9,1)" clip-path="url(#one2)">1</text><text transform="translate(451.600,370.200) scale(.855,1)">5</text><path d="M505.600 311.700L540.400 286.500" stroke="#d2b872" stroke-width="13.500" fill="none"/></g><defs><filter id="nz2" x="-5%" y="-5%" width="110%" height="110%" color-interpolation-filters="sRGB"><feTurbulence type="fractalNoise" baseFrequency="0.33" numOctaves="1" seed="3" result="t"/><feColorMatrix in="t" type="matrix" values="1 0 0 0 0  0 1 0 0 0  0 0 1 0 0  0 0 0 0 1" result="n"/><feMorphology in="SourceGraphic" operator="erode" radius="0.700" result="e"/><feGaussianBlur in="e" stdDeviation="0.600" result="eb"/><feComposite in="eb" in2="n" operator="arithmetic" k1="0" k2="1" k3="0.550" k4="-0.270" result="a"/><feComposite in="a" in2="eb" operator="in"/></filter></defs></svg>
<div class="abs" style="left:64px;top:246px;width:11px;height:11px;border:1px solid #6a6a6a;background:#f4f4f4"><div class="abs" style="left:2px;top:4px;width:5px;height:1px;background:#000"></div></div>
<div class="abs" style="left:151px;top:246px;width:11px;height:11px;border:1px solid #6a6a6a;background:#f4f4f4"><div class="abs" style="left:2px;top:4px;width:5px;height:1px;background:#000"></div><div class="abs" style="left:4px;top:2px;width:1px;height:5px;background:#000"></div></div>
<div class="lbl" style="left:74px;width:78px;text-align:center;top:244px;font-size:9.500px;line-height:14px">300%</div>
<div class="lbl" style="left:10.7px;top:279px;font-size:12.500px">Amount:</div>
<div class="abs" style="left:68px;top:275px;width:68px;height:21px;background:#fff;border:1px solid #b4b4b4;border-top:2px solid #7a7a7a;border-left-color:#999"></div>
<div class="lbl" style="left:72px;top:279px;font-size:12.500px">10</div>
<div class="lbl" style="left:139.5px;top:279px;font-size:12.500px">%</div>
<svg class="abs" style="left:89px;top:283px" width="20" height="21" viewBox="0 0 20 21"><path d="M2 6l4-3.500v2.500h6V2.500l4 3.500-4 3.500V7H6v2.500z" fill="#000"/><path d="M6 19l-2.500-4.500c-.7-1.200.8-2 1.600-1l.9 1V6.500c0-1.500 2-1.500 2 0V9c0-1.400 2-1.400 2 0v.5c0-1.300 2-1.300 2 0v.6c0-1.200 1.800-1.200 1.800 0V15c0 2-.8 3-1.300 4.500H6.500z" fill="#fff" stroke="#000" stroke-width="1.100"/></svg>
<div class="abs" style="left:22px;top:309px;width:168px;height:5px;border-radius:3px;background:linear-gradient(180deg,#4e4e4e 0,#8a8a8a 50%,#c8c8c8 100%)"></div>
<svg class="abs" style="left:15px;top:302px" width="16" height="16" viewBox="0 0 16 16"><defs><linearGradient id="th" x1="0" y1="0" x2="0" y2="1"><stop offset="0" stop-color="#7db4ee"/><stop offset=".5" stop-color="#4f8fe0"/><stop offset="1" stop-color="#c4e6ff"/></linearGradient></defs><path d="M8 1.500l5.500 6v5a1.500 1.500 0 0 1-1.500 1.500h-8a1.500 1.500 0 0 1-1.500-1.500v-5z" fill="url(#th)" stroke="#3b5a94" stroke-width="1"/></svg>
<div class="abs" style="left:9px;top:335px;width:311px;height:59px;border:1px solid #909090;box-shadow:inset 1px 1px 0 #fff, 1px 1px 0 #fff"></div>
<div class="lbl pin" style="left:25px;top:328.5px;padding:0 4px;font-size:12.500px;font-weight:bold;font-family:'DejaVu Sans Condensed','DejaVu Sans',sans-serif;background-position:0 1px">Distribution</div>
<div class="abs" style="left:19px;top:348.5px;width:15px;height:15px;border-radius:50%;border:1px solid #23408f;background:radial-gradient(circle at 50% 90%,#bfe6ff 0,#5fa2ee 45%,#2d6fd6 100%);box-shadow:0 1px 1px rgba(0,0,0,.3)"><div class="abs" style="left:4px;top:4px;width:5px;height:5px;border-radius:50%;background:#000"></div></div>
<div class="lbl" style="left:37.4px;top:349px;font-size:12.500px">Uniform</div>
<div class="abs" style="left:19px;top:370.5px;width:15px;height:15px;border-radius:50%;border:1px solid #6a6a6a;background:radial-gradient(circle at 50% 85%,#fff 0,#f2f2f2 50%,#cfcfcf 100%);box-shadow:0 1px 1px rgba(0,0,0,.3)"></div>
<div class="lbl" style="left:37.4px;top:371px;font-size:12.300px">Gaussian</div>
<div class="abs" style="left:10px;top:403.5px;width:13px;height:13px;border:1px solid #6a6a6a;border-radius:2px;background:linear-gradient(180deg,#fff,#e6e6e6)"></div>
<div class="lbl" style="left:27.2px;top:401px;font-size:12.500px">Monochromatic</div>
<div class="aqbtn" style="left:232px;top:31.5px;width:89px;height:21px;border-color:#2b3f9e;background:linear-gradient(180deg,#7fb2f0 0,#9ccbff 30%,#4a93e6 52%,#6fb8f7 78%,#b4e6ff 100%);box-shadow:0 1px 2px rgba(0,0,0,.4)">OK</div>
<div class="aqbtn" style="left:232px;top:59.5px;width:89px;height:21px;font-size:12.200px;line-height:21px;border-color:#6c6c6c;background:linear-gradient(180deg,#fdfdfd 0,#efefef 45%,#e0e0e0 55%,#fafafa 100%);box-shadow:0 1px 2px rgba(0,0,0,.35)">Cancel</div>
<div class="abs" style="left:232px;top:95px;width:14px;height:14px;border:1px solid #2d4aa0;border-radius:2px;background:linear-gradient(180deg,#5f9eea 0,#8ec6ff 50%,#c6ecff 100%);box-shadow:0 1px 1px rgba(0,0,0,.3)"></div>
<svg class="abs" style="left:232px;top:91px" width="16" height="18" viewBox="0 0 16 18"><path d="M3 10l3.500 4.500L13 2" stroke="#000" stroke-width="2.200" fill="none"/></svg>
<div class="lbl" style="left:250.6px;top:95px;font-size:12.200px">Preview</div>
</div><!--DLG_END-->
</body>
</html>
